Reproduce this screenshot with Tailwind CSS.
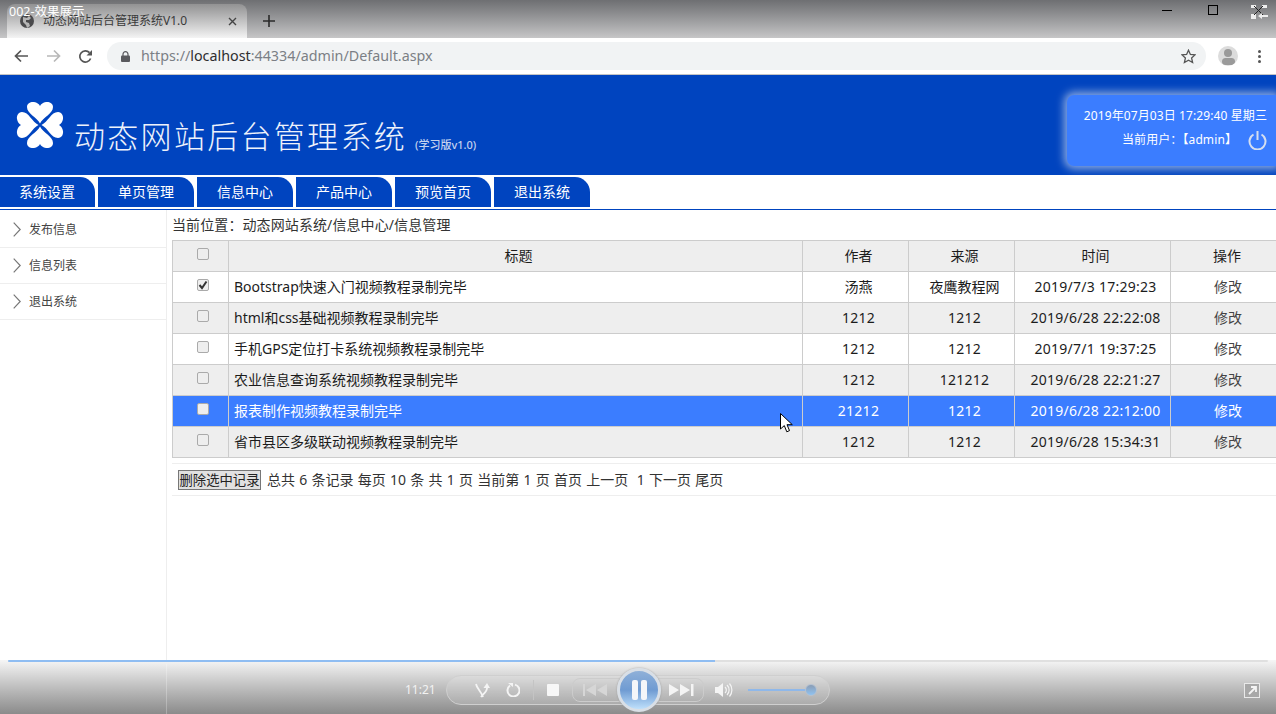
<!DOCTYPE html>
<html lang="zh-CN">
<head>
    <meta charset="UTF-8">
    <title>动态网站后台管理系统V1.0</title>
    <script src="https://cdn.jsdelivr.net/npm/@tailwindcss/browser@4"></script>
</head>
<body class="bg-white text-[14px] text-[#222] font-['Noto_Sans','Noto_Sans_CJK_SC',sans-serif] overflow-hidden">

<div class="relative w-[1276px] h-[714px] flex flex-col overflow-hidden">
    <!-- player title on top of the recording -->
    <div class="absolute left-[9px] top-[3px] text-[12.5px] leading-[18px] text-white z-10">002-效果展示</div>

    <!-- tab strip -->
    <div class="h-[38px] shrink-0 flex items-end bg-gradient-to-b from-[#6e6f72] to-[#c6c6c7] pl-[7px]">
        <div class="w-[240px] h-[34px] rounded-t-[8px] bg-gradient-to-b from-[#929293] to-[#f4f4f4] flex items-center pl-[13px] pr-[10px]">
            <svg class="w-[14px] h-[14px] shrink-0" viewBox="0 0 14 14"><circle cx="7" cy="7" r="7" fill="#4a4a4c"/><path d="M3 3l4 1 2-2 2 2-2 2-3 0 0 2 3 1 1 3-3 2-1-3-3-3z" fill="#b5b5b5"/></svg>
            <span class="ml-[9px] text-[12px] text-[#3a3a3a]">动态网站后台管理系统V1.0</span>
            <svg class="ml-auto w-[9px] h-[9px]" viewBox="0 0 9 9"><path d="M1 1l7 7M8 1l-7 7" stroke="#444" stroke-width="1.4"/></svg>
        </div>
        <svg class="ml-[16px] mb-[11px] w-[12px] h-[12px]" viewBox="0 0 12 12"><path d="M6 0v12M0 6h12" stroke="#2b2b2b" stroke-width="1.6"/></svg>
        <div class="ml-auto self-start flex items-start pr-[8px] pt-[5px]">
            <div class="w-[10px] h-px bg-black mt-[5px]"></div>
            <div class="ml-[36px] w-[10px] h-[10px] border border-black"></div>
            <svg class="ml-[33px] w-[17px] h-[15px]" viewBox="0 0 17 15"><path d="M0 0h5v3H0zM11 0h5v3h-5zM0 9h5v5H0z" fill="#eee"/><path d="M3 1l9 9M12 1l-9 9" stroke="#222"/><path d="M7 11l4-3v2h6v2h-6v2z" fill="#eee"/></svg>
        </div>
    </div>

    <!-- toolbar -->
    <div class="h-[37px] shrink-0 flex items-center bg-white border-b border-[#c4c4c4] pl-[14px]">
        <svg class="w-[14px] h-[14px]" viewBox="0 0 14 14"><path d="M14 7H2M7 1.5L1.5 7 7 12.5" fill="none" stroke="#555" stroke-width="1.7"/></svg>
        <svg class="ml-[19px] w-[14px] h-[14px]" viewBox="0 0 14 14"><path d="M0 7h12M7 1.5L12.5 7 7 12.5" fill="none" stroke="#b8b8b8" stroke-width="1.7"/></svg>
        <svg class="ml-[17px] w-[15px] h-[15px]" viewBox="0 0 15 15"><path d="M12.6 9.5A5.6 5.6 0 1 1 11.5 3.6" fill="none" stroke="#555" stroke-width="1.7"/><path d="M14 1v5.5H8.5z" fill="#555"/></svg>
        <div class="ml-[14px] w-[1099px] h-[28px] rounded-full bg-[#f1f3f4] flex items-center pl-[14px] pr-[10px]">
            <svg class="w-[9px] h-[11px]" viewBox="0 0 9 11"><path d="M2 5V3.2a2.5 2.5 0 0 1 5 0V5" fill="none" stroke="#5a5a5e" stroke-width="1.2"/><rect y="4.5" width="9" height="6.5" rx="1" fill="#5a5a5e"/></svg>
            <span class="ml-[11px] text-[14.3px] text-[#7b7f85]">https://<span class="text-[#2e2e30]">localhost</span>:44334/admin/Default.aspx</span>
            <svg class="ml-auto w-[15px] h-[15px]" viewBox="0 0 15 15"><path d="M7.5 1.2l1.9 4.2 4.6.5-3.4 3.1 1 4.5-4.1-2.3-4.1 2.3 1-4.5L1 5.9l4.6-.5z" fill="none" stroke="#555" stroke-width="1.3"/></svg>
        </div>
        <div class="ml-[12px] w-[20px] h-[20px] rounded-full bg-[#dcdcdc] overflow-hidden flex flex-col items-center">
            <div class="mt-[3px] w-[8px] h-[8px] rounded-full bg-[#9a9a9a]"></div>
            <div class="mt-[1px] w-[13px] h-[7px] rounded-full bg-[#9a9a9a]"></div>
        </div>
        <div class="ml-[20px] flex flex-col gap-[2px]">
            <div class="w-[3px] h-[3px] rounded-full bg-[#555]"></div>
            <div class="w-[3px] h-[3px] rounded-full bg-[#555]"></div>
            <div class="w-[3px] h-[3px] rounded-full bg-[#555]"></div>
        </div>
    </div>

    <!-- site header -->
    <header class="h-[100px] shrink-0 bg-[#0044bf] flex items-start pl-[16px]">
        <svg class="mt-[26px] w-[48px] h-[48px]" viewBox="-24 -24 48 48" fill="#fff">
            <path d="M0-1.5C-3-8-13-11-13-18C-13-22-9-23.5-6-23C-3-22.5-1-21 0-19C1-21 3-22.5 6-23C9-23.5 13-22 13-18C13-11 3-8 0-1.5Z"/>
            <path transform="rotate(90)" d="M0-1.5C-3-8-13-11-13-18C-13-22-9-23.5-6-23C-3-22.5-1-21 0-19C1-21 3-22.5 6-23C9-23.5 13-22 13-18C13-11 3-8 0-1.5Z"/>
            <path transform="rotate(180)" d="M0-1.5C-3-8-13-11-13-18C-13-22-9-23.5-6-23C-3-22.5-1-21 0-19C1-21 3-22.5 6-23C9-23.5 13-22 13-18C13-11 3-8 0-1.5Z"/>
            <path transform="rotate(270)" d="M0-1.5C-3-8-13-11-13-18C-13-22-9-23.5-6-23C-3-22.5-1-21 0-19C1-21 3-22.5 6-23C9-23.5 13-22 13-18C13-11 3-8 0-1.5Z"/>
        </svg>
        <h1 class="ml-[10px] mt-[38px] text-[31px] leading-[44px] font-light tracking-[2.3px] text-[#eef2fb] font-['Noto_Sans_CJK_SC',sans-serif] whitespace-nowrap">动态网站后台管理系统</h1>
        <span class="ml-[8px] mt-[62px] text-[11px] leading-[16px] font-medium text-[#c4d2ee] whitespace-nowrap">(学习版v1.0)</span>
        <div class="ml-auto mt-[20px] w-[209px] h-[71px] rounded-l-[7px] bg-[#3b7dff] shadow-[0_0_9px_3px_rgba(255,255,255,0.55)] pr-[9px] pt-[11px] text-[12px] tracking-[0.1px] text-white text-right">
            <div class="leading-[20px] whitespace-nowrap">2019年07月03日 17:29:40 星期三</div>
            <div class="flex justify-end items-center mt-[2px] h-[24px]">
                <span class="leading-[20px]">当前用户：【admin】</span>
                <svg class="ml-[11px] w-[19px] h-[20px]" viewBox="0 0 19 20"><path d="M5.5 4.5a8 8 0 1 0 8 0M9.5 1v9" fill="none" stroke="#d5deef" stroke-width="2"/></svg>
            </div>
        </div>
    </header>

    <!-- top nav -->
    <nav class="h-[35px] shrink-0 border-b border-[#0044bf] flex items-start gap-[3px] pt-[2px] -ml-px text-white">
        <a class="w-[96px] h-[30px] leading-[30px] text-center bg-[#0044bf] rounded-tr-[15px]">系统设置</a>
        <a class="w-[96px] h-[30px] leading-[30px] text-center bg-[#0044bf] rounded-tr-[15px]">单页管理</a>
        <a class="w-[96px] h-[30px] leading-[30px] text-center bg-[#0044bf] rounded-tr-[15px]">信息中心</a>
        <a class="w-[96px] h-[30px] leading-[30px] text-center bg-[#0044bf] rounded-tr-[15px]">产品中心</a>
        <a class="w-[96px] h-[30px] leading-[30px] text-center bg-[#0044bf] rounded-tr-[15px]">预览首页</a>
        <a class="w-[96px] h-[30px] leading-[30px] text-center bg-[#0044bf] rounded-tr-[15px]">退出系统</a>
    </nav>

    <!-- body -->
    <div class="flex-1 flex min-h-0">
        <aside class="w-[167px] shrink-0 border-r border-[#eeeeee] pt-[2px] text-[12px] text-[#444]">
            <div class="h-[36px] border-b border-[#eeeeee] flex items-center pl-[13px]">
                <svg class="w-[8px] h-[15px]" viewBox="0 0 8 15"><path d="M.7.7L7.2 7.5.7 14.3" fill="none" stroke="#777" stroke-width="1.2"/></svg>
                <span class="ml-[8px]">发布信息</span>
            </div>
            <div class="h-[36px] border-b border-[#eeeeee] flex items-center pl-[13px]">
                <svg class="w-[8px] h-[15px]" viewBox="0 0 8 15"><path d="M.7.7L7.2 7.5.7 14.3" fill="none" stroke="#777" stroke-width="1.2"/></svg>
                <span class="ml-[8px]">信息列表</span>
            </div>
            <div class="h-[36px] border-b border-[#eeeeee] flex items-center pl-[13px]">
                <svg class="w-[8px] h-[15px]" viewBox="0 0 8 15"><path d="M.7.7L7.2 7.5.7 14.3" fill="none" stroke="#777" stroke-width="1.2"/></svg>
                <span class="ml-[8px]">退出系统</span>
            </div>
        </aside>

        <main class="flex-1 min-w-0 pl-[5px]">
            <div class="h-[30px] leading-[30px] text-[#333] tracking-[0.1px]">当前位置：动态网站系统/信息中心/信息管理</div>
            <table class="w-[1105px] table-fixed border-collapse text-center text-[#1c1c1c]">
                <colgroup>
                    <col class="w-[56px]"><col class="w-[574px]"><col class="w-[106px]"><col class="w-[106px]"><col class="w-[156px]"><col class="w-[107px]">
                </colgroup>
                <tr class="h-[31px] bg-[#eeeeee]">
                    <td class="border border-[#cccccc] pl-[5px] pb-[5px]"><span class="block mx-auto w-[12px] h-[12px] rounded-[2px] border border-[#aaaaaa] bg-[#eeeeee]"></span></td>
                    <td class="border border-[#cccccc] pl-[6px] pb-[2px]">标题</td>
                    <td class="border border-[#cccccc] pl-[6px] pb-[2px]">作者</td>
                    <td class="border border-[#cccccc] pl-[6px] pb-[2px]">来源</td>
                    <td class="border border-[#cccccc] pl-[6px] pb-[2px]">时间</td>
                    <td class="border border-[#cccccc] pl-[6px] pb-[2px]">操作</td>
                </tr>
                <tr class="h-[31px] bg-white">
                    <td class="border border-[#cccccc] pl-[5px] pb-[5px]"><span class="block mx-auto w-[12px] h-[12px] rounded-[2px] border border-[#aaaaaa] bg-[#eeeeee]"><svg class="w-[10px] h-[10px]" viewBox="0 0 10 10"><path d="M1.5 5l2.5 3 4.5-6.5" fill="none" stroke="#333" stroke-width="2"/></svg></span></td>
                    <td class="border border-[#cccccc] text-left pl-[5px] pb-[2px]">Bootstrap快速入门视频教程录制完毕</td>
                    <td class="border border-[#cccccc] pl-[6px] pb-[2px]">汤燕</td>
                    <td class="border border-[#cccccc] pl-[6px] pb-[2px]">夜鹰教程网</td>
                    <td class="border border-[#cccccc] pl-[6px] pb-[2px] tracking-[0.25px]">2019/7/3 17:29:23</td>
                    <td class="border border-[#cccccc] pl-[8px] pb-[2px] text-[#444]">修改</td>
                </tr>
                <tr class="h-[31px] bg-[#eeeeee]">
                    <td class="border border-[#cccccc] pl-[5px] pb-[5px]"><span class="block mx-auto w-[12px] h-[12px] rounded-[2px] border border-[#aaaaaa] bg-[#eeeeee]"></span></td>
                    <td class="border border-[#cccccc] text-left pl-[5px] pb-[2px]">html和css基础视频教程录制完毕</td>
                    <td class="border border-[#cccccc] pl-[6px] pb-[2px] tracking-[0.25px]">1212</td>
                    <td class="border border-[#cccccc] pl-[6px] pb-[2px] tracking-[0.25px]">1212</td>
                    <td class="border border-[#cccccc] pl-[6px] pb-[2px] tracking-[0.25px]">2019/6/28 22:22:08</td>
                    <td class="border border-[#cccccc] pl-[8px] pb-[2px] text-[#444]">修改</td>
                </tr>
                <tr class="h-[31px] bg-white">
                    <td class="border border-[#cccccc] pl-[5px] pb-[5px]"><span class="block mx-auto w-[12px] h-[12px] rounded-[2px] border border-[#aaaaaa] bg-[#eeeeee]"></span></td>
                    <td class="border border-[#cccccc] text-left pl-[5px] pb-[2px]">手机GPS定位打卡系统视频教程录制完毕</td>
                    <td class="border border-[#cccccc] pl-[6px] pb-[2px] tracking-[0.25px]">1212</td>
                    <td class="border border-[#cccccc] pl-[6px] pb-[2px] tracking-[0.25px]">1212</td>
                    <td class="border border-[#cccccc] pl-[6px] pb-[2px] tracking-[0.25px]">2019/7/1 19:37:25</td>
                    <td class="border border-[#cccccc] pl-[8px] pb-[2px] text-[#444]">修改</td>
                </tr>
                <tr class="h-[31px] bg-[#eeeeee]">
                    <td class="border border-[#cccccc] pl-[5px] pb-[5px]"><span class="block mx-auto w-[12px] h-[12px] rounded-[2px] border border-[#aaaaaa] bg-[#eeeeee]"></span></td>
                    <td class="border border-[#cccccc] text-left pl-[5px] pb-[2px]">农业信息查询系统视频教程录制完毕</td>
                    <td class="border border-[#cccccc] pl-[6px] pb-[2px] tracking-[0.25px]">1212</td>
                    <td class="border border-[#cccccc] pl-[6px] pb-[2px] tracking-[0.25px]">121212</td>
                    <td class="border border-[#cccccc] pl-[6px] pb-[2px] tracking-[0.25px]">2019/6/28 22:21:27</td>
                    <td class="border border-[#cccccc] pl-[8px] pb-[2px] text-[#444]">修改</td>
                </tr>
                <tr class="h-[31px] bg-[#3b7dff] text-white">
                    <td class="border border-[#cccccc] pl-[5px] pb-[5px]"><span class="block mx-auto w-[12px] h-[12px] rounded-[2px] border border-[#aaaaaa] bg-[#eeeeee]"></span></td>
                    <td class="border border-[#cccccc] text-left pl-[5px] pb-[2px]">报表制作视频教程录制完毕</td>
                    <td class="border border-[#cccccc] pl-[6px] pb-[2px] tracking-[0.25px]">21212</td>
                    <td class="border border-[#cccccc] pl-[6px] pb-[2px] tracking-[0.25px]">1212</td>
                    <td class="border border-[#cccccc] pl-[6px] pb-[2px] tracking-[0.25px]">2019/6/28 22:12:00</td>
                    <td class="border border-[#cccccc] pl-[8px] pb-[2px]">修改</td>
                </tr>
                <tr class="h-[31px] bg-[#eeeeee]">
                    <td class="border border-[#cccccc] pl-[5px] pb-[5px]"><span class="block mx-auto w-[12px] h-[12px] rounded-[2px] border border-[#aaaaaa] bg-[#eeeeee]"></span></td>
                    <td class="border border-[#cccccc] text-left pl-[5px] pb-[2px]">省市县区多级联动视频教程录制完毕</td>
                    <td class="border border-[#cccccc] pl-[6px] pb-[2px] tracking-[0.25px]">1212</td>
                    <td class="border border-[#cccccc] pl-[6px] pb-[2px] tracking-[0.25px]">1212</td>
                    <td class="border border-[#cccccc] pl-[6px] pb-[2px] tracking-[0.25px]">2019/6/28 15:34:31</td>
                    <td class="border border-[#cccccc] pl-[8px] pb-[2px] text-[#444]">修改</td>
                </tr>
            </table>
            <!-- pager -->
            <div class="mt-[5px] h-[33px] w-[1105px] border-y border-[#eeeeee] flex items-center pl-[6px] text-[#333] whitespace-pre">
                <button class="w-[83px] h-[20px] leading-[18px] text-[13.33px] bg-[#e1e1e1] border border-[#777777] text-[#222] whitespace-nowrap">删除选中记录</button><span class="ml-[6px] [word-spacing:0.6px]">总共 6 条记录 每页 10 条 共 1 页 当前第 1 页 首页 上一页  1 下一页 尾页</span>
            </div>
        </main>
    </div>

    <!-- video player bar -->
    <footer class="relative h-[54px] shrink-0 bg-gradient-to-b from-[#f6f6f6] to-[#8b8b8b]">
        <div class="absolute left-[166px] top-[4px] w-px h-[50px] bg-white/25"></div>
        <div class="mx-[8px] h-[2px] rounded-full bg-[#e0e0e0] overflow-hidden">
            <div class="w-[707px] h-full bg-[#8fbdf2]"></div>
        </div>
        <div class="flex items-center mt-[13px] pl-[405px] h-[30px]">
            <span class="w-[41px] text-[12px] text-[#f2f2f2]">11:21</span>
            <div class="w-[384px] h-[30px] rounded-full border border-[#cfcfcf] bg-white/15 flex items-center pl-[28px]">
                <svg class="w-[15px] h-[15px]" viewBox="0 0 15 15"><path d="M1 1c1 5 5 7 7 13M12 5c0 4-4 6-6 9" fill="none" stroke="#f4f4f4" stroke-width="1.800"/><path d="M8.500 5l3.500-5 3 5z" fill="#f4f4f4"/></svg>
                <svg class="ml-[16px] w-[14px] h-[14px]" viewBox="0 0 14 14"><path d="M4 2.500A6 6 0 1 0 9 1.600" fill="none" stroke="#f4f4f4" stroke-width="2"/><path d="M2 0h5v4z" fill="#f4f4f4"/></svg>
                <div class="ml-[13px] w-px h-[20px] bg-[#c4c4c4]"></div>
                <div class="ml-[13px] w-[12px] h-[12px] rounded-[1px] bg-[#f7f7f7]"></div>
                <div class="ml-[13px] w-[48px] h-[24px] rounded-l-[8px] border border-[#cccccc] flex items-center pl-[10px]">
                    <svg class="w-[25px] h-[12px]" viewBox="0 0 25 12" fill="#d6d6d6"><path d="M0 0h2v12H0zM13 0v12L3 6zM24 0v12L14 6z"/></svg>
                </div>
                <!-- round pause button sits over the prev/next group -->
                <div class="relative z-[1] -mx-[3px] w-[44px] h-[44px] shrink-0 rounded-full border-[3px] border-[#d9dfe6] bg-gradient-to-b from-[#8fb0d8] via-[#6f9bd2] to-[#bfe0fb] flex items-center justify-center gap-[3px] shadow-[0_0_2px_#999]">
                    <div class="w-[6px] h-[20px] rounded-[2px] bg-[#f4f6f9]"></div>
                    <div class="w-[6px] h-[20px] rounded-[2px] bg-[#f4f6f9]"></div>
                </div>
                <div class="w-[46px] h-[24px] rounded-r-[8px] border border-[#cccccc] flex items-center pl-[10px]">
                    <svg class="w-[25px] h-[12px]" viewBox="0 0 25 12" fill="#f4f4f4"><path d="M0 0l10 6-10 6zM11 0l10 6-10 6zM22 0h2.500v12H22z"/></svg>
                </div>
                <svg class="ml-[11px] w-[18px] h-[14px]" viewBox="0 0 18 14"><path d="M0 4h3l5-4v14l-5-4H0z" fill="#f4f4f4"/><path d="M10 4a4 4 0 0 1 0 6M12 2a7 7 0 0 1 0 10M14.500 .5a10 10 0 0 1 0 13" fill="none" stroke="#f4f4f4" stroke-width="1.200"/></svg>
                <div class="relative ml-[15px] w-[68px] h-[2px] bg-[#8fb8ea]">
                    <div class="absolute left-[57px] -top-[5px] w-[12px] h-[12px] rounded-full bg-gradient-to-b from-[#8a9db5] to-[#8fc2f0] border border-[#b5c2d2]"></div>
                </div>
            </div>
            <svg class="ml-[414px] w-[16px] h-[15px]" viewBox="0 0 16 15"><rect x=".5" y=".5" width="15" height="14" fill="#a8a8a8" stroke="#e9e9e9"/><path d="M5 11l6-6M7 4h5v5" fill="none" stroke="#f4f4f4" stroke-width="1.800"/></svg>
        </div>
    </footer>

    <!-- mouse pointer -->
    <svg class="absolute left-[780px] top-[413px] w-[13px] h-[20px]" viewBox="0 0 13 20"><path d="M.5.500v15.500l3.800-3.400 2.500 6.200 2.700-1.200-2.500-5.900h5.300z" fill="#fff" stroke="#000"/></svg>
</div>

</body>
</html>
